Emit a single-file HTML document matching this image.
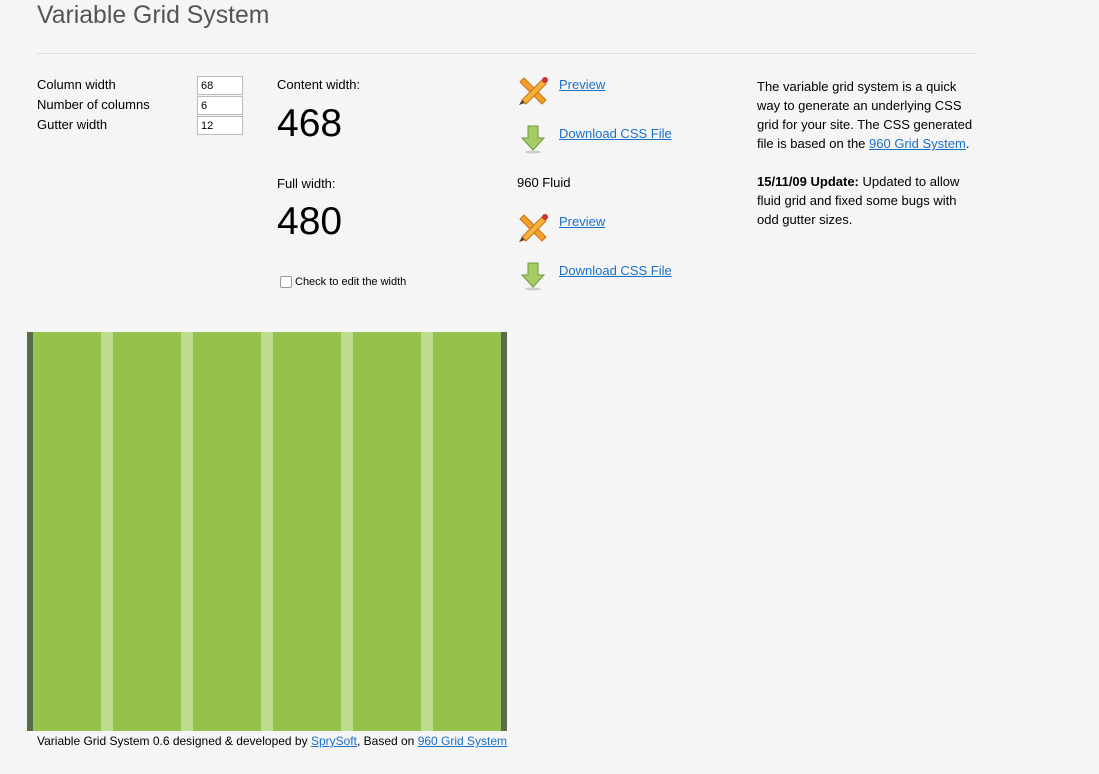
<!DOCTYPE html>
<html><head><style>
body{margin:0;background:#f5f5f5;font-family:"Liberation Sans",sans-serif;font-size:13px;color:#000;width:1099px;height:774px;overflow:hidden;position:relative}
.a{position:absolute}
h1{position:absolute;left:37px;top:2px;margin:0;font-size:24.8px;font-weight:normal;color:#555}
a{color:#1a6fc9;text-decoration:underline}
input.t{position:absolute;left:197px;width:38px;height:15px;border:1px solid #bbb;background:#fff;font-size:11px;padding:1px 3px;margin:0;box-sizing:content-box}
.big{font-size:39px}
</style></head><body>
<h1>Variable Grid System</h1>
<div class="a" style="left:37px;top:53px;width:940px;height:1px;background:#ddd"></div>
<div class="a" style="left:37px;top:77px">Column width</div>
<div class="a" style="left:37px;top:97px">Number of columns</div>
<div class="a" style="left:37px;top:117px">Gutter width</div>
<input class="t" style="top:76px" value="68">
<input class="t" style="top:96px" value="6">
<input class="t" style="top:116px" value="12">
<div class="a" style="left:277px;top:77px">Content width:</div>
<div class="a big" style="left:277px;top:102px">468</div>
<div class="a" style="left:277px;top:176px">Full width:</div>
<div class="a big" style="left:277px;top:200px">480</div>
<div class="a" style="left:280px;top:276px;width:10px;height:10px;border:1px solid #999;border-radius:2px;background:#fff"></div>
<div class="a" style="left:295px;top:276px;font-size:11px">Check to edit the width</div>

<svg class="a" style="left:516px;top:74px" width="34" height="34" viewBox="0 0 34 34"><path d="M4 8 L8 4 L30 26 L26 30Z" fill="#f3a12a" stroke="#c9741a"/><path d="M6 26 L26 6 L30 10 L10 30Z" fill="#f6b13a" stroke="#c9741a"/><circle cx="29" cy="6" r="3" fill="#c33"/><path d="M3 31 L6 26 L9 29Z" fill="#542"/></svg>
<svg class="a" style="left:520px;top:124px" width="26" height="30" viewBox="0 0 26 30"><path d="M8 2 H18 V14 H24 L13 26 L2 14 H8Z" fill="#a6cc66" stroke="#6d9a3a"/><ellipse cx="13" cy="28" rx="8" ry="1.5" fill="#ccc"/></svg>
<a class="a" style="left:559px;top:77px" href="#">Preview</a>
<a class="a" style="left:559px;top:126px" href="#">Download CSS File</a>
<div class="a" style="left:517px;top:175px">960 Fluid</div>
<svg class="a" style="left:516px;top:211px" width="34" height="34" viewBox="0 0 34 34"><path d="M4 8 L8 4 L30 26 L26 30Z" fill="#f3a12a" stroke="#c9741a"/><path d="M6 26 L26 6 L30 10 L10 30Z" fill="#f6b13a" stroke="#c9741a"/><circle cx="29" cy="6" r="3" fill="#c33"/><path d="M3 31 L6 26 L9 29Z" fill="#542"/></svg>
<svg class="a" style="left:520px;top:261px" width="26" height="30" viewBox="0 0 26 30"><path d="M8 2 H18 V14 H24 L13 26 L2 14 H8Z" fill="#a6cc66" stroke="#6d9a3a"/><ellipse cx="13" cy="28" rx="8" ry="1.5" fill="#ccc"/></svg>
<a class="a" style="left:559px;top:214px" href="#">Preview</a>
<a class="a" style="left:559px;top:263px" href="#">Download CSS File</a>

<div class="a" style="left:757px;top:77px;width:220px;line-height:19px">The variable grid system is a quick way to generate an underlying CSS grid for your site. The CSS generated file is based on the <a href="#">960 Grid System</a>.<br><br><b>15/11/09 Update:</b> Updated to allow fluid grid and fixed some bugs with odd gutter sizes.</div>

<div class="a" style="left:27px;top:332px;width:480px;height:399px;background:#5a6b4c"></div>
<div class="a" style="left:33px;top:332px;width:468px;height:399px;background:linear-gradient(90deg,#95c24b 0 68px,#bedc8e 68px 80px,#95c24b 80px 148px,#bedc8e 148px 160px,#95c24b 160px 228px,#bedc8e 228px 240px,#95c24b 240px 308px,#bedc8e 308px 320px,#95c24b 320px 388px,#bedc8e 388px 400px,#95c24b 400px 468px)"></div>
<div class="a" style="left:37px;top:734px;font-size:12px">Variable Grid System 0.6 designed &amp; developed by <a href="#">SprySoft</a>, Based on <a href="#">960 Grid System</a></div>
</body></html>
